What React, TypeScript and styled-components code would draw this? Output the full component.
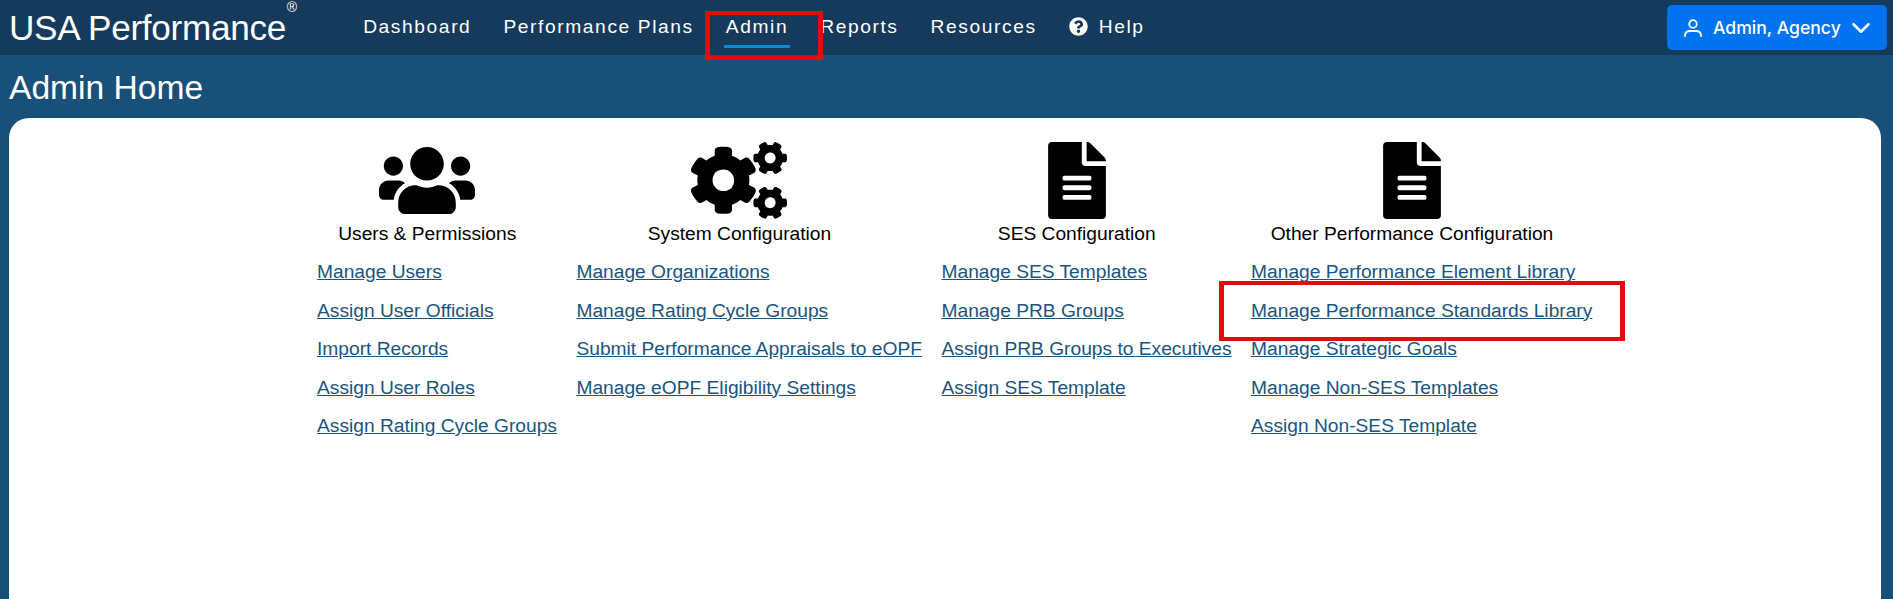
import React from "react";
import styled, { createGlobalStyle } from "styled-components";
import { FaCogs, FaFileAlt, FaQuestionCircle, FaUsers } from "react-icons/fa";
import { FiChevronDown } from "react-icons/fi";

const GlobalStyle = createGlobalStyle`
    html, body {
        margin: 0;
        padding: 0;
        height: 100%;
        overflow: hidden;
    }
    body {
        font-family: "Liberation Sans", Arial, sans-serif;
        background-color: #18507a;
    }
`;

const Page = styled.div`
    position: relative;
    height: 599px;
    display: flex;
    flex-direction: column;
    background-color: #18507a;
`;

const Header = styled.header`
    height: 55px;
    flex-shrink: 0;
    display: flex;
    align-items: center;
    background-color: #163a5c;
    padding: 0 6px 0 9px;
`;

const Logo = styled.a`
    position: relative;
    color: #fff;
    font-size: 35.2px;
    letter-spacing: -0.3px;
    line-height: 55px;
    margin-right: 77px;
    white-space: nowrap;
    sup {
        position: absolute;
        right: -11px;
        top: 0;
        font-size: 14px;
        line-height: 14px;
        letter-spacing: 0;
    }
`;

const Nav = styled.nav`
    display: flex;
    align-items: center;
    gap: 32px;
    flex: 1;
    margin-top: -2px;
`;

const NavItem = styled.a<{ $active?: boolean }>`
    position: relative;
    display: flex;
    align-items: center;
    gap: 11px;
    color: #fff;
    font-size: 19.2px;
    letter-spacing: 1.6px;
    line-height: 55px;
    white-space: nowrap;
    ${(p) =>
        p.$active &&
        `
        &::after {
            content: "";
            position: absolute;
            left: -2px;
            right: -2px;
            bottom: 6px;
            height: 3px;
            background-color: #0b8bd0;
        }
    `}
`;

const UserButton = styled.button`
    width: 220px;
    height: 45px;
    display: flex;
    align-items: center;
    border: none;
    border-radius: 5px;
    background-color: #0073f0;
    color: #fff;
    font-family: "Inter", "Liberation Sans", sans-serif;
    font-size: 17.6px;
    font-weight: 500;
    padding: 0 0 0 17px;
    white-space: nowrap;
`;

const UserIcon = styled.svg`
    width: 18px;
    height: 18px;
    margin-right: 11px;
    fill: none;
    stroke: #fff;
    stroke-width: 1.8;
    stroke-linecap: round;
`;

const Chevron = styled(FiChevronDown)`
    width: 30px;
    height: 30px;
    margin-left: 5px;
`;

const Title = styled.h1`
    margin: 0;
    height: 63px;
    padding-left: 9px;
    color: #fff;
    font-size: 33.6px;
    font-weight: 400;
    line-height: 65px;
`;

const Card = styled.main`
    flex: 1;
    margin: 0 12px 0 9px;
    padding: 24px 0 0 308px;
    display: flex;
    gap: 19.5px;
    background-color: #fff;
    border-radius: 20px 20px 0 0;
`;

const Column = styled.section`
    display: flex;
    flex-direction: column;
`;

const ColumnHead = styled.div`
    margin-right: 19.5px;
    margin-bottom: 4.4px;
    display: flex;
    flex-direction: column;
    align-items: center;
    color: #000;
    font-size: 19.2px;
    line-height: 30px;
    white-space: nowrap;
    svg {
        width: 96px;
        height: 77px;
        display: block;
    }
`;

const LinkRow = styled.a`
    color: #1a5480;
    font-size: 19.2px;
    line-height: 38.4px;
    text-decoration: underline;
    white-space: nowrap;
`;

const Callout = styled.div<{ $left: number; $top: number; $width: number; $height: number }>`
    position: absolute;
    left: ${(p) => p.$left}px;
    top: ${(p) => p.$top}px;
    width: ${(p) => p.$width}px;
    height: ${(p) => p.$height}px;
    box-sizing: border-box;
    border-style: solid;
    border-color: #e60a0a;
    border-width: 4px 5px;
    pointer-events: none;
`;

const columns = [
    {
        icon: <FaUsers />,
        title: "Users & Permissions",
        links: ["Manage Users", "Assign User Officials", "Import Records", "Assign User Roles", "Assign Rating Cycle Groups"],
    },
    {
        icon: <FaCogs />,
        title: "System Configuration",
        links: [
            "Manage Organizations",
            "Manage Rating Cycle Groups",
            "Submit Performance Appraisals to eOPF",
            "Manage eOPF Eligibility Settings",
        ],
    },
    {
        icon: <FaFileAlt />,
        title: "SES Configuration",
        links: ["Manage SES Templates", "Manage PRB Groups", "Assign PRB Groups to Executives", "Assign SES Template"],
    },
    {
        icon: <FaFileAlt />,
        title: "Other Performance Configuration",
        links: [
            "Manage Performance Element Library",
            "Manage Performance Standards Library",
            "Manage Strategic Goals",
            "Manage Non-SES Templates",
            "Assign Non-SES Template",
        ],
    },
];

export default function App() {
    return (
        <>
            <GlobalStyle />
            <Page>
                <Header>
                    <Logo>
                        USA Performance<sup>®</sup>
                    </Logo>
                    <Nav>
                        <NavItem>Dashboard</NavItem>
                        <NavItem>Performance Plans</NavItem>
                        <NavItem $active>Admin</NavItem>
                        <NavItem>Reports</NavItem>
                        <NavItem>Resources</NavItem>
                        <NavItem>
                            <FaQuestionCircle size={19} />
                            Help
                        </NavItem>
                    </Nav>
                    <UserButton>
                        <UserIcon viewBox="0 0 18 18">
                            <circle cx="9" cy="5" r="3.8" />
                            <path d="M1 17c0-3.4 2.4-5 5-5h6c2.6 0 5 1.6 5 5" />
                        </UserIcon>
                        Admin, Agency
                        <Chevron />
                    </UserButton>
                </Header>
                <Title>Admin Home</Title>
                <Card>
                    {columns.map((col) => (
                        <Column key={col.title}>
                            <ColumnHead>
                                {col.icon}
                                {col.title}
                            </ColumnHead>
                            {col.links.map((link) => (
                                <LinkRow key={link}>{link}</LinkRow>
                            ))}
                        </Column>
                    ))}
                </Card>
                <Callout $left={705} $top={11} $width={118} $height={49} />
                <Callout $left={1219} $top={281} $width={406} $height={60} />
            </Page>
        </>
    );
}
